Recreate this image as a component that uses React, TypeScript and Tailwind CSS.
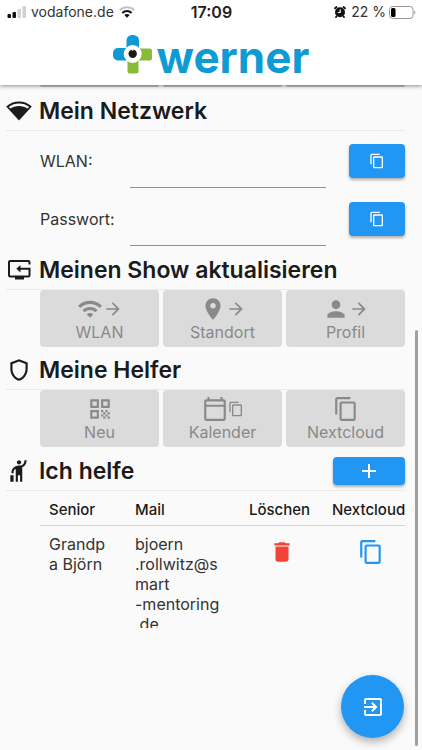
import type { ReactNode } from "react";
import {
  MdAdd,
  MdArrowForward,
  MdContentCopy,
  MdDelete,
  MdExitToApp,
  MdHail,
  MdOutlineCalendarToday,
  MdOutlineShield,
  MdPerson,
  MdPlace,
  MdQrCode,
  MdWifi,
} from "react-icons/md";

function NetworkIcon() {
  return (
    <svg viewBox="0 0 26 20" className="h-5 w-[26px]" aria-hidden="true">
      <path d="M13 0.5C8 0.5 3.6 2.4 0.2 5.5L13 19.5L25.8 5.5C22.4 2.4 18 0.5 13 0.5Z" fill="#1b1b1b" />
      <path d="M2.800 5.900C5.700 3.700 9.200 2.500 13 2.500S20.300 3.700 23.200 5.900L21.700 7.500C19.200 5.900 16.200 5 13 5S6.800 5.900 4.300 7.500Z" fill="#fafafa" />
    </svg>
  );
}

function ResetTvIcon() {
  return (
    <svg viewBox="0 0 26 22" className="h-[22px] w-[26px]" aria-hidden="true">
      <path
        d="M23.500 5.500V3.200Q23.500 2 22.300 2H4.200Q3 2 3 3.200V16.300Q3 17.500 4.200 17.500H22.300Q23.500 17.500 23.500 16.300V9.700H12.500"
        fill="none"
        stroke="#1b1b1b"
        strokeWidth="2"
      />
      <path d="M10.300 9.700L14.500 6V13.400Z" fill="#1b1b1b" />
      <path d="M9 17.500H18V20.500H9Z" fill="#1b1b1b" />
    </svg>
  );
}

function StatusBar() {
  return (
    <div className="grid h-6 grid-cols-3 items-center pr-[6px] pl-[7px] text-sm text-[#333]">
      <div className="flex items-center gap-[5px]">
        <svg viewBox="0 0 19 12" className="h-3 w-[19px] shrink-0" aria-hidden="true">
          <rect x="0.500" y="8" width="3.500" height="4" rx="1" fill="#111" />
          <rect x="5.500" y="6" width="3.500" height="6" rx="1" fill="#111" />
          <rect x="10.500" y="3" width="3.500" height="9" rx="1" fill="#d2d2d2" />
          <rect x="15.500" y="0" width="3.500" height="12" rx="1" fill="#d2d2d2" />
        </svg>
        <span className="-mr-[5px] pr-[5px]">vodafone.de</span>
        <svg viewBox="0 0 16 12" className="h-3 w-4 shrink-0" fill="none" strokeWidth="2" aria-hidden="true">
          <path d="M0.800 4.200C4.800 0.200 11.200 0.200 15.200 4.200" stroke="#c4c4c4" />
          <path d="M3.300 7C6 4.400 10 4.400 12.700 7" stroke="#111" />
          <path d="M5.300 9C6.900 7.600 9.100 7.600 10.700 9L8 11.800Z" fill="#111" />
        </svg>
      </div>
      <span className="text-center text-base font-semibold text-[#222]">17:09</span>
      <div className="flex items-center justify-end gap-[3px]">
        <svg viewBox="0 0 12 12" className="mr-[2px] h-3 w-3" aria-hidden="true">
          <circle cx="6" cy="6.300" r="5" fill="#111" />
          <path d="M0.500 2.800L3 0.500M9 0.500L11.500 2.800M2.800 10L1.500 11.700M9.200 10L10.500 11.700" stroke="#111" strokeWidth="1.800" />
          <path d="M6.200 3.500V6.500H3.700" fill="none" stroke="#fff" strokeWidth="1.200" />
        </svg>
        <span>22 %</span>
        <svg viewBox="0 0 27 13" className="h-[13px] w-[27px]" aria-hidden="true">
          <rect x="0.500" y="0.500" width="23.500" height="12" rx="3" fill="none" stroke="#999" />
          <rect x="2" y="2" width="4.500" height="9" rx="1.500" fill="#000" />
          <path d="M25.300 4.500C26.800 5.300 26.800 7.700 25.300 8.500Z" fill="#999" />
        </svg>
      </div>
    </div>
  );
}

function Logo() {
  return (
    <div className="flex h-[61px] items-center justify-center gap-[5px]">
      <svg viewBox="0 0 39 39" className="h-[39px] w-[39px]" aria-hidden="true">
        <rect x="13.500" y="0" width="12.500" height="20" rx="5.500" fill="#0e9bd4" />
        <rect x="0" y="13" width="20" height="12.500" rx="5" fill="#0e9bd4" />
        <rect x="20" y="13.500" width="19" height="12" rx="2.500" fill="#86bc36" />
        <rect x="14.500" y="20" width="11" height="18.500" rx="2.500" fill="#86bc36" />
        <circle cx="19.700" cy="19" r="9" fill="#fff" />
        <circle cx="19.700" cy="18.700" r="4.200" fill="#191919" />
        <circle cx="19.500" cy="14.700" r="1" fill="#fff" />
      </svg>
      <span className="pt-1 text-[44px] leading-[48px] font-bold text-[#0e9bd4]">werner</span>
    </div>
  );
}

function Heading({ icon, title, action }: { icon: ReactNode; title: string; action?: ReactNode }) {
  return (
    <div className="flex h-10 items-center border-b border-[#ebebeb]">
      <span className="flex w-[33px] shrink-0 justify-start text-[26px] text-[#1b1b1b]">{icon}</span>
      <h2 className="flex-1 text-[23px] leading-7 font-semibold whitespace-nowrap text-[#1b1b1b]">{title}</h2>
      {action}
    </div>
  );
}

function Field({ id, label }: { id: string; label: string }) {
  return (
    <div className="flex h-[58px] pl-[34px]">
      <label htmlFor={id} className="w-[90px] shrink-0 pt-[18px] text-base leading-6 text-[#333]">
        {label}
      </label>
      <input id={id} type="text" className="h-[57px] min-w-0 flex-1 border-b border-[#8f8f8f] bg-transparent pt-4 text-base outline-none" />
      <button
        type="button"
        aria-label={`${label} kopieren`}
        className="mt-[13px] ml-[23px] flex h-[34px] w-14 shrink-0 items-center justify-center rounded bg-[#2196f3] text-base text-white shadow-[0_2px_3px_rgba(0,0,0,0.3)]"
      >
        <MdContentCopy />
      </button>
    </div>
  );
}

function Tile({ icon, label }: { icon: ReactNode; label: string }) {
  return (
    <button type="button" className="flex h-[57px] flex-col items-center rounded bg-[#dbdbdb] pt-[6px] text-[#898989]">
      <span className="flex h-[26px] items-center text-[26px]">{icon}</span>
      <span className="text-base leading-5">{label}</span>
    </button>
  );
}

export default function App() {
  return (
    <div className="relative min-h-screen bg-[#fafafa] font-[Inter,'Liberation_Sans',sans-serif]">
      <header className="relative z-10 bg-white shadow-[0_1px_4px_rgba(0,0,0,0.45)]">
        <StatusBar />
        <Logo />
      </header>

      <main className="pr-[17px] pl-[6px]">
        <div className="grid h-[6px] grid-cols-3 items-start gap-1 pl-[34px]">
          <span className="h-[2px] rounded-b bg-[#c4c4c4]" />
          <span className="h-[2px] rounded-b bg-[#c4c4c4]" />
          <span className="h-[2px] rounded-b bg-[#c4c4c4]" />
        </div>
        <section>
          <Heading icon={<NetworkIcon />} title="Mein Netzwerk" />
          <Field id="wlan" label="WLAN:" />
          <Field id="passwort" label="Passwort:" />
        </section>

        <section className="mt-[3px]">
          <Heading icon={<ResetTvIcon />} title="Meinen Show aktualisieren" />
          <div className="grid grid-cols-3 gap-1 pl-[34px]">
            <Tile icon={<><MdWifi /><MdArrowForward className="text-xl" /></>} label="WLAN" />
            <Tile icon={<><MdPlace /><MdArrowForward className="text-xl" /></>} label="Standort" />
            <Tile icon={<><MdPerson /><MdArrowForward className="text-xl" /></>} label="Profil" />
          </div>
        </section>

        <section className="mt-[3px]">
          <Heading icon={<MdOutlineShield />} title="Meine Helfer" />
          <div className="grid grid-cols-3 gap-1 pl-[34px]">
            <Tile icon={<MdQrCode />} label="Neu" />
            <Tile icon={<><MdOutlineCalendarToday /><MdContentCopy className="text-base" /></>} label="Kalender" />
            <Tile icon={<MdContentCopy />} label="Nextcloud" />
          </div>
        </section>

        <section className="mt-1">
          <Heading
            icon={<MdHail />}
            title="Ich helfe"
            action={
              <button
                type="button"
                aria-label="Hinzufügen"
                className="flex h-7 w-[72px] items-center justify-center rounded bg-[#2196f3] text-2xl text-white shadow-[0_2px_3px_rgba(0,0,0,0.3)]"
              >
                <MdAdd />
              </button>
            }
          />
          <div className="pl-[34px]">
            <table className="w-full table-fixed border-collapse text-left">
              <thead>
                <tr className="h-[34px] border-b border-[#d4d4d4] text-[15px] text-[#1b1b1b]">
                  <th className="w-[86px] pt-1 pl-[9px] font-medium">Senior</th>
                  <th className="w-[114px] pt-1 pl-[9px] font-medium">Mail</th>
                  <th className="w-[83px] pt-1 pl-[9px] font-medium">Löschen</th>
                  <th className="pt-1 pl-[9px] font-medium whitespace-nowrap">Nextcloud</th>
                </tr>
              </thead>
              <tbody>
                <tr className="align-top text-base leading-5 text-[#333]">
                  <td className="pt-2 pl-[9px]">
                    Grandp
                    <br />a Björn
                  </td>
                  <td className="pt-2 pl-[9px]">
                    <div className="h-[94px] overflow-hidden whitespace-nowrap">
                      bjoern
                      <br />
                      .rollwitz@s
                      <br />
                      mart
                      <br />
                      -mentoring
                      <br />
                      .de
                    </div>
                  </td>
                  <td className="pt-[13px]">
                    <button type="button" aria-label="Löschen" className="mx-auto block text-[26px] text-[#f44336]">
                      <MdDelete />
                    </button>
                  </td>
                  <td className="pt-[13px] pl-[13px]">
                    <button type="button" aria-label="Nextcloud-Link kopieren" className="mx-auto block text-[26px] text-[#2196f3]">
                      <MdContentCopy />
                    </button>
                  </td>
                </tr>
              </tbody>
            </table>
          </div>
        </section>
      </main>

      <div className="fixed top-[330px] right-1 bottom-1 w-[3px] rounded-full bg-[#a0a0a0]" />
      <button
        type="button"
        aria-label="Abmelden"
        className="fixed right-[18px] bottom-3 flex h-[63px] w-[63px] items-center justify-center rounded-full bg-[#2196f3] text-2xl text-white shadow-[0_4px_8px_rgba(0,0,0,0.3)]"
      >
        <MdExitToApp />
      </button>
    </div>
  );
}
